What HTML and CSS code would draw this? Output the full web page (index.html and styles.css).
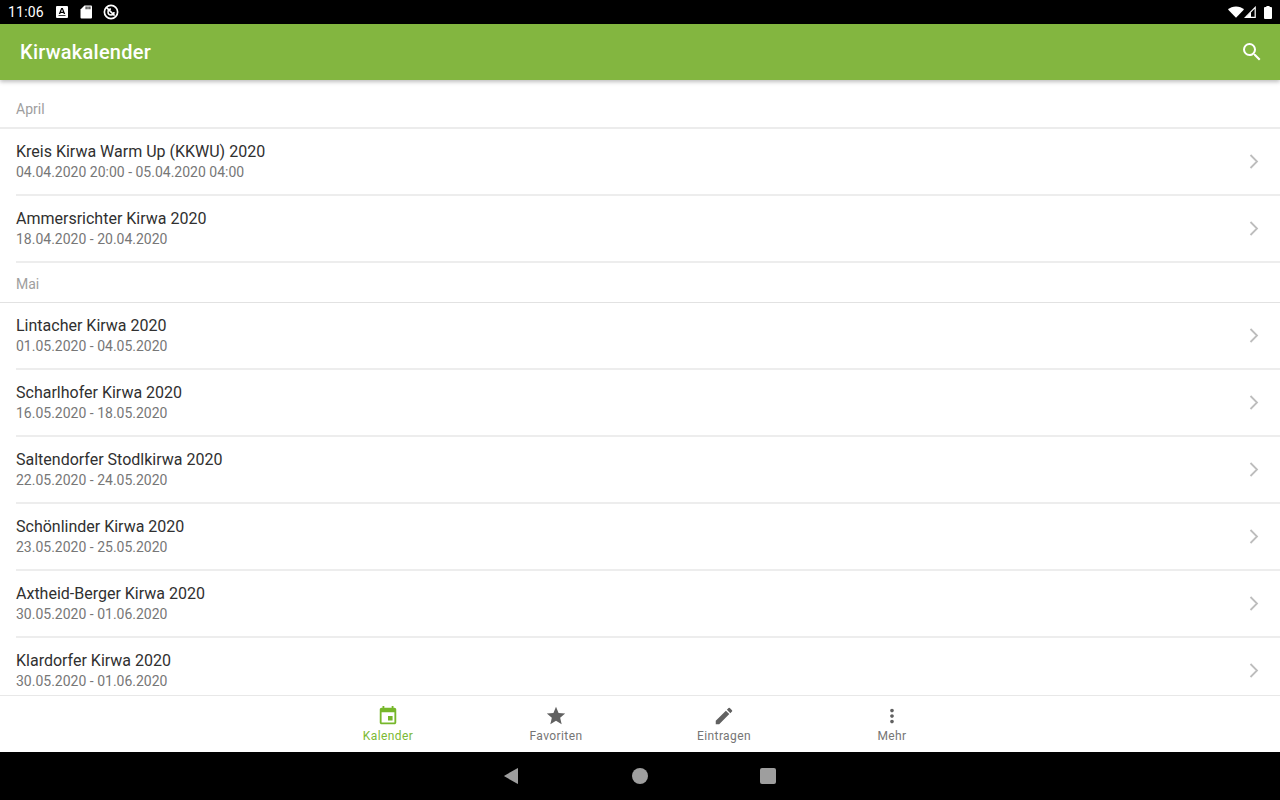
FILE: index.html
```html
<!DOCTYPE html>
<html lang="de">
<head>
  <meta charset="UTF-8" />
  <meta name="viewport" content="width=device-width, initial-scale=1" />
  <title>Kirwakalender</title>
  <link rel="stylesheet" href="styles.css">
</head>
<body>

<div class="app">

  <div class="status-bar">
    <div class="status-left">
      <span class="clock">11:06</span>
      <svg class="status-icon" viewBox="0 0 14 14" width="14" height="14"><path fill="#fff" d="M2 1h10a1 1 0 0 1 1 1v10a1 1 0 0 1-1 1H2a1 1 0 0 1-1-1V2a1 1 0 0 1 1-1z"/><path fill="#000" d="M6.200 3h1.600l2.400 6H8.800l-.4-1.100H5.600L5.200 9H3.800zM6 6.800h2L7 4.300zM3.500 10h7v.8h-7z"/></svg>
      <svg class="status-icon" viewBox="0 0 14 14" width="14" height="14"><path fill="#fff" d="M5.500 0.500H12a1 1 0 0 1 1 1v11a1 1 0 0 1-1 1H2.500a1 1 0 0 1-1-1V4.500z"/><path fill="#000" d="M6.600 1.600h1v2.600h-1zM8.500 1.600h1v2.600h-1zM10.400 1.600h1v2.600h-1z"/></svg>
      <svg class="status-icon" viewBox="0 0 16 16" width="16" height="16"><circle cx="8" cy="8" r="6.600" fill="none" stroke="#fff" stroke-width="1.700"/><path fill="none" stroke="#fff" stroke-width="1.500" d="M11 8a3 3 0 1 1-3-3"/><path stroke="#fff" stroke-width="1.600" d="M3.600 3.600l8 8"/></svg>
    </div>
    <div class="status-right">
      <svg viewBox="0 0 16 12" width="16" height="12"><path fill="#fff" d="M0 3.600C2 1.600 4.800.4 8 .4s6 1.200 8 3.200l-8 8.200z"/></svg>
      <svg class="signal" viewBox="0 0 12 12" width="12" height="12"><path fill="none" stroke="#fff" stroke-width="1.200" d="M11.200 1.400v10H1.400z"/><path fill="#fff" d="M7 6v5.400H2z"/></svg>
      <svg class="battery" viewBox="0 0 8 13" width="8" height="13"><path fill="#fff" d="M2.400 0h3.200v1H7a1 1 0 0 1 1 1v10a1 1 0 0 1-1 1H1a1 1 0 0 1-1-1V2a1 1 0 0 1 1-1h1.400z"/></svg>
    </div>
  </div>

  <header class="app-bar">
    <h1>Kirwakalender</h1>
    <svg class="search" viewBox="0 0 24 24" width="24" height="24"><path fill="#fff" d="M15.500 14h-.79l-.28-.27A6.470 6.470 0 0 0 16 9.500 6.500 6.500 0 1 0 9.500 16c1.610 0 3.090-.59 4.230-1.570l.27.28v.79l5 4.990L20.490 19l-4.990-5zm-6 0C7.010 14 5 11.990 5 9.500S7.010 5 9.500 5 14 7.010 14 9.500 11.990 14 9.500 14z"/></svg>
  </header>

  <main class="list">
    <div class="section first">April</div>
    <a class="item">
      <div><div class="title">Kreis Kirwa Warm Up (KKWU) 2020</div><div class="date">04.04.2020 20:00 - 05.04.2020 04:00</div></div>
      <svg class="chevron" viewBox="0 0 24 24" width="24" height="24"><path d="M9.500 5 16 11.500 9.500 18"/></svg>
    </a>
    <a class="item">
      <div><div class="title">Ammersrichter Kirwa 2020</div><div class="date">18.04.2020 - 20.04.2020</div></div>
      <svg class="chevron" viewBox="0 0 24 24" width="24" height="24"><path d="M9.500 5 16 11.500 9.500 18"/></svg>
    </a>

    <div class="section">Mai</div>
    <a class="item">
      <div><div class="title">Lintacher Kirwa 2020</div><div class="date">01.05.2020 - 04.05.2020</div></div>
      <svg class="chevron" viewBox="0 0 24 24" width="24" height="24"><path d="M9.500 5 16 11.500 9.500 18"/></svg>
    </a>
    <a class="item">
      <div><div class="title">Scharlhofer Kirwa 2020</div><div class="date">16.05.2020 - 18.05.2020</div></div>
      <svg class="chevron" viewBox="0 0 24 24" width="24" height="24"><path d="M9.500 5 16 11.500 9.500 18"/></svg>
    </a>
    <a class="item">
      <div><div class="title">Saltendorfer Stodlkirwa 2020</div><div class="date">22.05.2020 - 24.05.2020</div></div>
      <svg class="chevron" viewBox="0 0 24 24" width="24" height="24"><path d="M9.500 5 16 11.500 9.500 18"/></svg>
    </a>
    <a class="item">
      <div><div class="title">Schönlinder Kirwa 2020</div><div class="date">23.05.2020 - 25.05.2020</div></div>
      <svg class="chevron" viewBox="0 0 24 24" width="24" height="24"><path d="M9.500 5 16 11.500 9.500 18"/></svg>
    </a>
    <a class="item">
      <div><div class="title">Axtheid-Berger Kirwa 2020</div><div class="date">30.05.2020 - 01.06.2020</div></div>
      <svg class="chevron" viewBox="0 0 24 24" width="24" height="24"><path d="M9.500 5 16 11.500 9.500 18"/></svg>
    </a>
    <a class="item">
      <div><div class="title">Klardorfer Kirwa 2020</div><div class="date">30.05.2020 - 01.06.2020</div></div>
      <svg class="chevron" viewBox="0 0 24 24" width="24" height="24"><path d="M9.500 5 16 11.500 9.500 18"/></svg>
    </a>
  </main>

  <nav class="bottom-nav">
    <div class="tab active">
      <svg viewBox="0 0 24 24" width="22" height="22"><path d="M17 12h-5v5h5v-5zM16 1v2H8V1H6v2H5c-1.110 0-1.990.9-1.990 2L3 19c0 1.100.89 2 2 2h14c1.100 0 2-.9 2-2V5c0-1.100-.9-2-2-2h-1V1h-2zm3 18H5V8h14v11z"/></svg>
      <span>Kalender</span>
    </div>
    <div class="tab">
      <svg viewBox="0 0 24 24" width="22" height="22"><path d="M12 17.270 18.180 21l-1.640-7.030L22 9.240l-7.190-.61L12 2 9.190 8.630 2 9.240l5.460 4.730L5.820 21z"/></svg>
      <span>Favoriten</span>
    </div>
    <div class="tab">
      <svg viewBox="0 0 24 24" width="22" height="22"><path d="M3 17.250V21h3.750L17.810 9.940l-3.750-3.750L3 17.250zM20.710 7.040a1 1 0 0 0 0-1.410l-2.340-2.340a1 1 0 0 0-1.410 0l-1.830 1.830 3.750 3.750 1.830-1.830z"/></svg>
      <span>Eintragen</span>
    </div>
    <div class="tab">
      <svg viewBox="0 0 24 24" width="22" height="22"><path d="M12 8c1.100 0 2-.9 2-2s-.9-2-2-2-2 .9-2 2 .9 2 2 2zm0 2c-1.100 0-2 .9-2 2s.9 2 2 2 2-.9 2-2-.9-2-2-2zm0 6c-1.100 0-2 .9-2 2s.9 2 2 2 2-.9 2-2-.9-2-2-2z"/></svg>
      <span>Mehr</span>
    </div>
  </nav>

  <div class="system-nav">
    <svg viewBox="0 0 16 16" width="16" height="16"><path fill="#9e9e9e" d="M14 .5v15a.4.4 0 0 1-.6.300L.3 8.300a.4.4 0 0 1 0-.6L13.400.2a.4.4 0 0 1 .6.300z"/></svg>
    <span class="nav-circle"></span>
    <span class="nav-square"></span>
  </div>

</div>

</body>
</html>
```

FILE: styles.css
```css
* {
  box-sizing: border-box;
}
html, body {
  margin: 0;
  height: 100%;
  overflow: hidden;
}
body {
  font-family: 'Roboto', 'Liberation Sans', sans-serif;
  background: #fff;
}
.app {
  display: flex;
  flex-direction: column;
  height: 800px;
}

.status-bar {
  display: flex;
  justify-content: space-between;
  align-items: center;
  flex: 0 0 24px;
  background: #000;
  color: #fff;
  padding: 0 8px;
}
.status-left {
  display: flex;
  align-items: center;
}
.clock {
  font-size: 14px;
  letter-spacing: 0.2px;
  width: 47px;
}
.status-icon {
  margin-right: 10px;
}
.status-right {
  display: flex;
  align-items: center;
}
.battery {
  margin-left: 8px;
}

.app-bar {
  display: flex;
  justify-content: space-between;
  align-items: center;
  flex: 0 0 56px;
  padding: 0 16px 0 20px;
  background: #83b640;
  box-shadow: 0 2px 4px rgba(0,0,0,0.25);
  position: relative;
}
.app-bar h1 {
  margin: 0;
  font-size: 20px;
  font-weight: 500;
  letter-spacing: 0.25px;
  color: #fff;
}

.list {
  flex: 1;
  min-height: 0;
  overflow: hidden;
}
.section {
  display: flex;
  align-items: center;
  height: 40px;
  padding: 3px 16px 0;
  font-size: 14px;
  color: #9e9e9e;
  border-bottom: 1px solid #e2e2e2;
}
.section.first {
  height: 49px;
  padding-top: 11px;
  border-bottom: 2px solid #ececec;
}
.item {
  display: flex;
  justify-content: space-between;
  align-items: center;
  height: 67px;
  margin-left: 16px;
  padding: 0 15px 0 0;
  border-bottom: 2px solid #ededed;
}
.title {
  font-size: 16px;
  line-height: 22px;
  color: #303030;
}
.date {
  font-size: 14px;
  line-height: 20px;
  margin: -1px 0 1px;
  color: #777;
}
.chevron path {
  fill: none;
  stroke: #bdbdbd;
  stroke-width: 1.800;
}

.bottom-nav {
  display: flex;
  justify-content: center;
  flex: 0 0 57px;
  background: #fff;
  border-top: 1px solid #e8e8e8;
}
.tab {
  display: flex;
  flex-direction: column;
  align-items: center;
  width: 168px;
  padding-top: 9px;
  font-size: 12px;
  letter-spacing: 0.4px;
  color: #757575;
}
.tab svg {
  fill: #616161;
  margin-bottom: 1px;
}
.tab span {
  line-height: 16px;
}
.tab.active {
  color: #7cba33;
}
.tab.active svg {
  fill: #76b72a;
}

.system-nav {
  display: flex;
  justify-content: center;
  align-items: center;
  gap: 112px;
  flex: 0 0 48px;
  background: #000;
}
.nav-circle {
  width: 16px;
  height: 16px;
  border-radius: 50%;
  background: #9e9e9e;
}
.nav-square {
  width: 16px;
  height: 16px;
  border-radius: 2px;
  background: #9e9e9e;
}
```
